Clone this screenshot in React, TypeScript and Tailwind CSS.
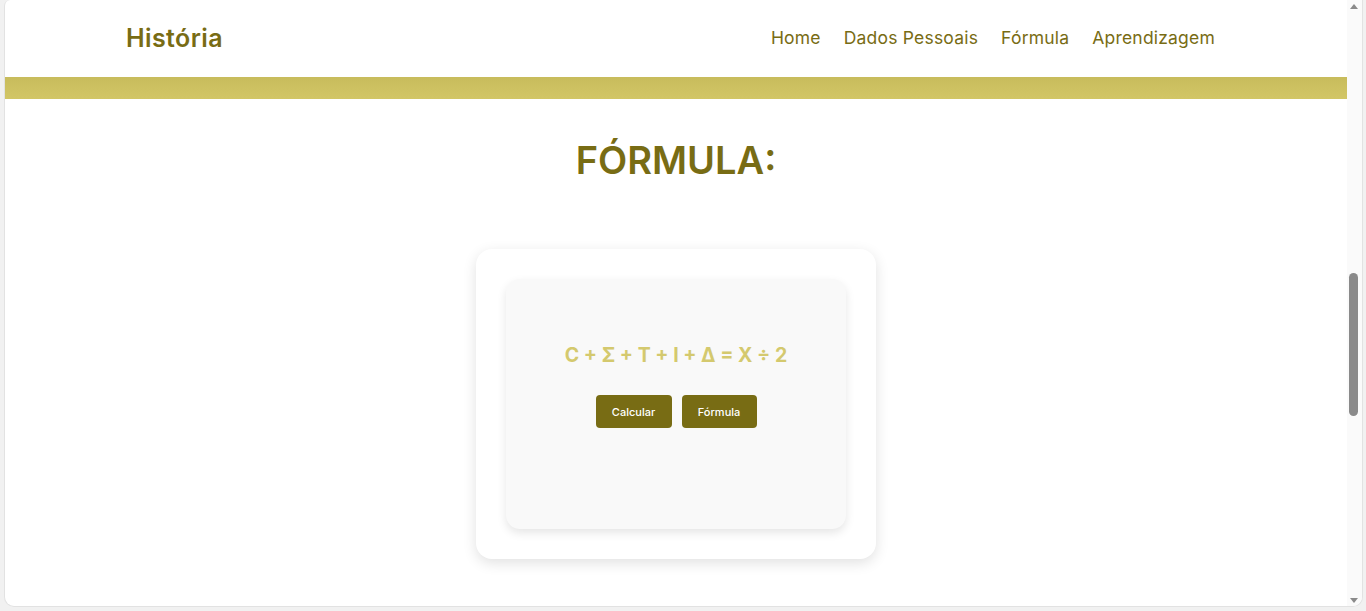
import React from "react";

export default function App() {
  const font = { fontFamily: "Inter, 'Noto Sans', sans-serif" };
  return (
    <div className="h-[611px] w-full bg-[#f1f1f1] pl-[4px] pr-[3px] pb-[4px]" style={font}>
      <div className="flex h-full overflow-hidden rounded-b-[10px] rounded-tl-[6px] border-x border-b border-[#e2e2e2] bg-white">
        <div className="flex flex-1 flex-col">
          <header className="flex h-[77px] items-center justify-between pl-[121px] pr-[132px]">
            <div className="text-[25px] font-semibold tracking-[0.4px] text-[#786c14] leading-[30px] -mt-[2px]">História</div>
            <nav className="flex gap-[23px] text-[17.5px] tracking-[0.2px] text-[#786c14]">
              <a>Home</a>
              <a>Dados Pessoais</a>
              <a>Fórmula</a>
              <a>Aprendizagem</a>
            </nav>
          </header>
          <div className="h-[22px] bg-gradient-to-b from-[#c8bc5c] to-[#d2c666]" />
          <main className="flex flex-col items-center">
            <h1 className="mt-[37px] text-[38px] font-semibold leading-[48px] text-[#786c14]">FÓRMULA:</h1>
            <div className="mt-[65px] rounded-[16px] bg-white p-[30px] shadow-[0_4px_14px_rgba(0,0,0,0.12)]">
              <div className="flex h-[250px] w-[340px] flex-col items-center rounded-[14px] bg-[#f9f9f9] pt-[62px] shadow-[0_4px_10px_rgba(0,0,0,0.1)]">
                <div className="text-[19.5px] font-bold text-[#d4c96e]">C + Σ + T + I + Δ = X ÷ 2</div>
                <div className="mt-[25px] flex gap-[10px]">
                  <button className="h-[33px] w-[76px] rounded-[4px] bg-[#786c14] text-[11px] font-medium text-white">Calcular</button>
                  <button className="h-[33px] w-[75px] rounded-[4px] bg-[#786c14] text-[11px] font-medium text-white">Fórmula</button>
                </div>
              </div>
            </div>
          </main>
        </div>
        <div className="relative w-[15px] bg-[#fafafa]">
          <div className="absolute left-[3px] top-[4px] h-0 w-0 border-x-[4px] border-b-[5px] border-x-transparent border-b-[#8a8a8a]" />
          <div className="absolute left-[2px] top-[273px] h-[143px] w-[9px] rounded-full bg-[#8a8a8a]" />
          <div className="absolute bottom-[3px] left-[3px] h-0 w-0 border-x-[4px] border-t-[5px] border-x-transparent border-t-[#8a8a8a]" />
        </div>
      </div>
    </div>
  );
}
